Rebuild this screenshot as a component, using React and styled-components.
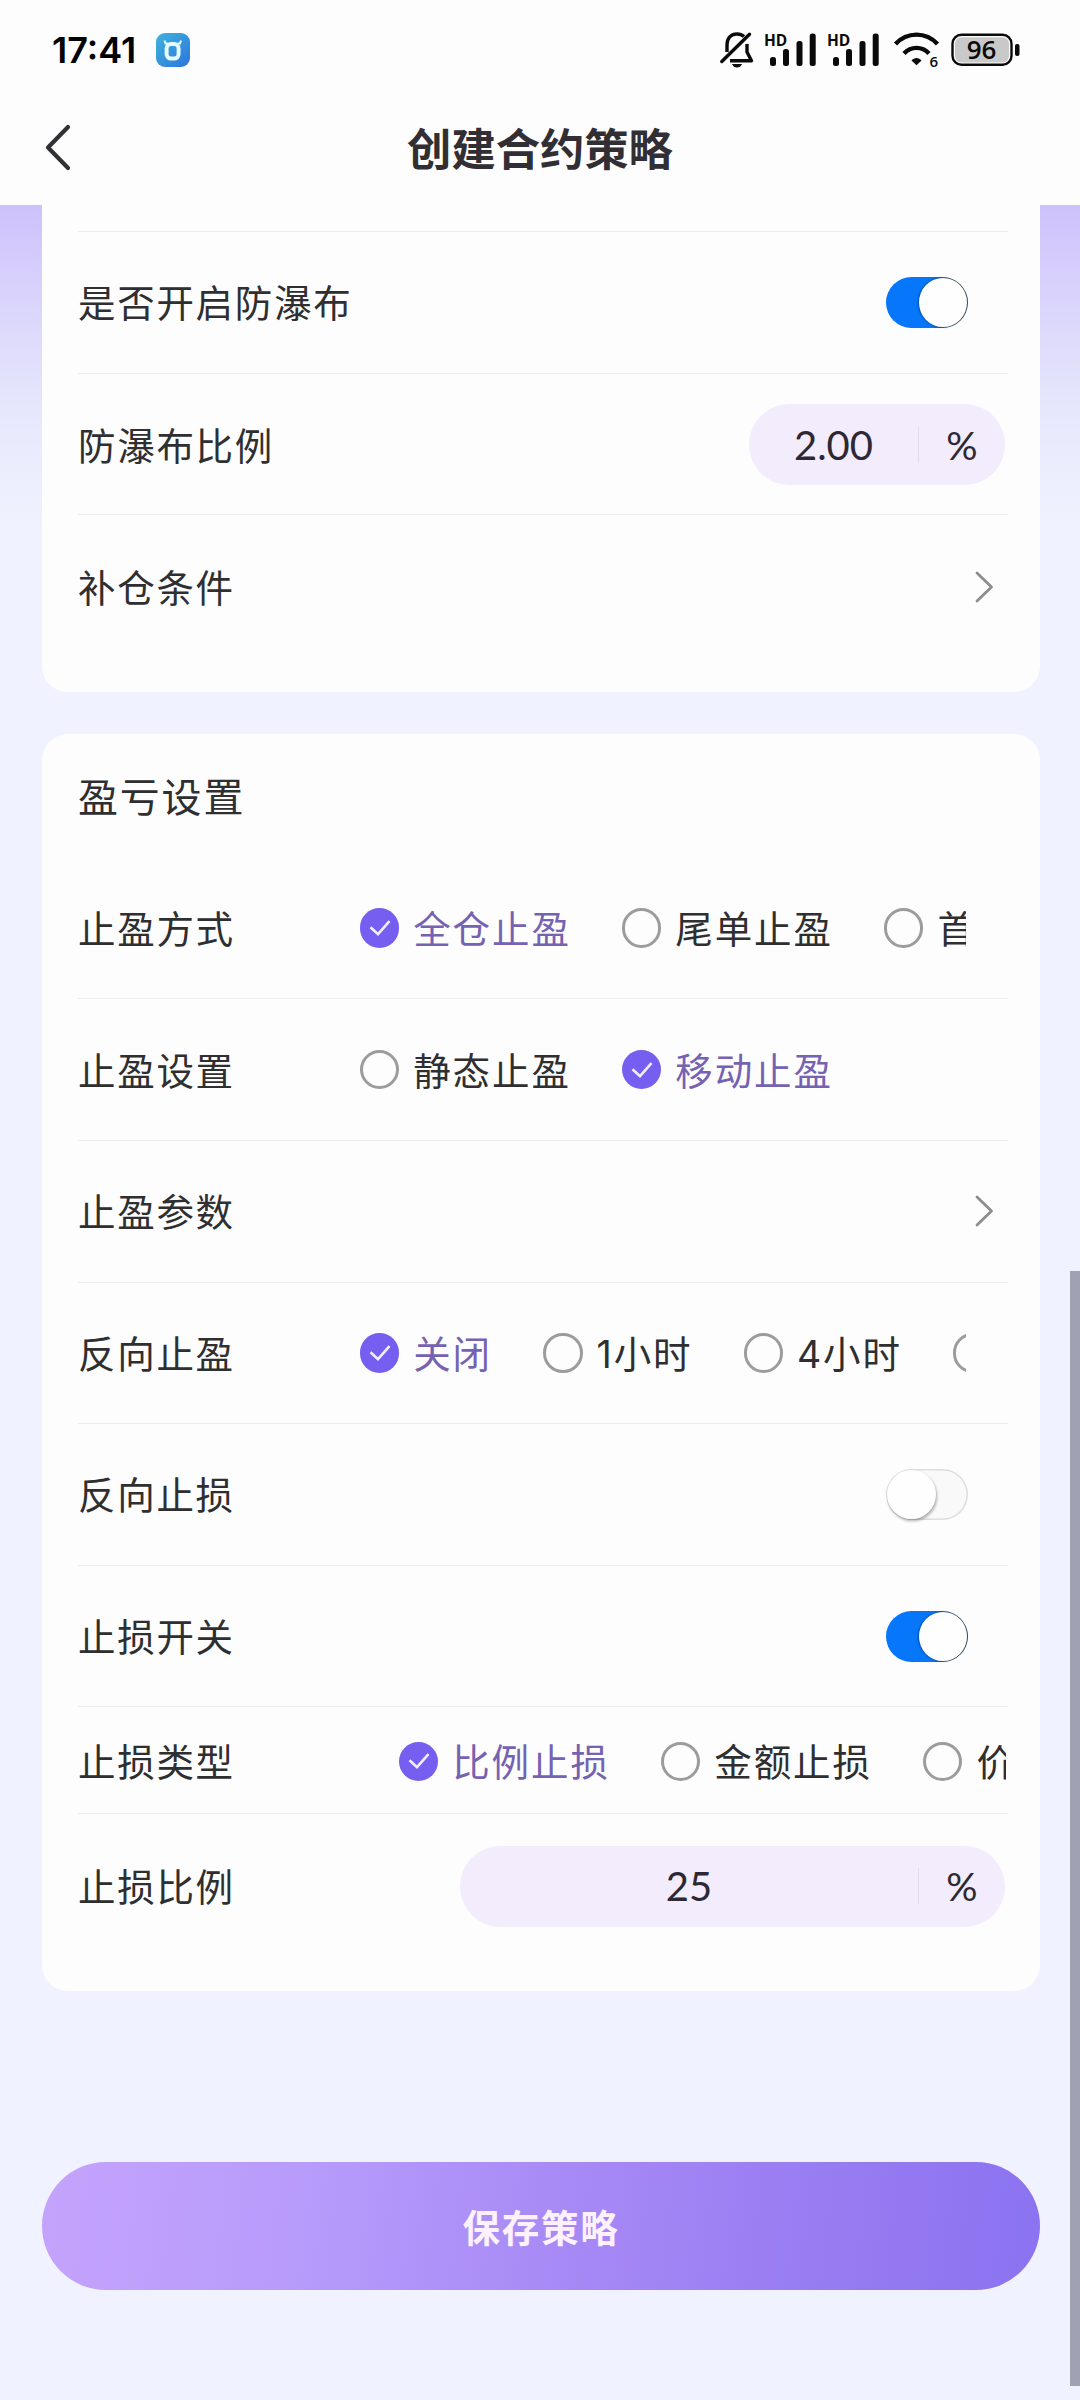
import React, { useState } from "react";
import styled, { createGlobalStyle } from "styled-components";

const GlobalStyle = createGlobalStyle`
  * {
    box-sizing: border-box;
  }

  body {
    margin: 0;
    background: #f0f2ff;
    font-family: Inter, "Noto Sans CJK SC", sans-serif;
    color: #2f2f31;
  }

  svg {
    flex: none;
    overflow: visible;
  }
`;

const Page = styled.div`
  position: relative;
  display: flex;
  flex-direction: column;
  width: 1080px;
  height: 2400px;
  overflow: hidden;
  background: linear-gradient(
    180deg,
    #cdc1fb 205px,
    #d6cefc 270px,
    #e1e0fb 365px,
    #e9ebfd 440px,
    #f0f2ff 530px
  );
`;

const StatusBar = styled.div`
  display: flex;
  align-items: center;
  justify-content: space-between;
  height: 100px;
  padding: 0 60px 0 52px;
  background: #fdfdfd;
`;

const StatusLeft = styled.div`
  display: flex;
  align-items: center;
  gap: 17px;
`;

const Time = styled.span`
  width: 87px;
  padding-bottom: 1px;
  font-size: 36px;
  font-weight: 600;
  white-space: nowrap;
  color: #000;
`;

const StatusRight = styled.div`
  display: flex;
  align-items: center;
  gap: 11px;
`;

const SignalGroup = styled.div`
  display: flex;
  align-items: center;
  gap: 11px;
  margin-right: 3px;
`;

const Header = styled.header`
  display: grid;
  grid-template-columns: 120px 1fr 120px;
  align-items: center;
  height: 105px;
  padding-bottom: 6px;
  background: #fdfdfd;
`;

const BackButton = styled.button`
  display: flex;
  padding: 0 0 5px 44px;
  border: 0;
  background: none;
`;

const Title = styled.h1`
  margin: 0;
  text-align: center;
  font-size: 44.3px;
  line-height: 64px;
  font-weight: 700;
  color: #322f34;
`;

const Content = styled.main`
  display: flex;
  flex-direction: column;
  padding: 0 40px 0 42px;
`;

const Card = styled.section`
  padding: 0 32px 35px 36px;
  background: #fdfdfd;
  border-radius: ${(props) => (props.$cut ? "0 0 26px 26px" : "26px")};
  margin-bottom: ${(props) => (props.$cut ? "42px" : "0")};
`;

const CutRow = styled.div`
  height: 27px;
  border-bottom: 1px solid #eeeef0;
`;

const CardTitle = styled.h2`
  display: flex;
  align-items: center;
  height: 124px;
  margin: 0;
  padding-bottom: 2px;
  font-size: 40px;
  font-weight: 400;
  letter-spacing: 1.8px;
`;

const Row = styled.div`
  display: flex;
  align-items: center;
  justify-content: space-between;
  height: ${(props) => props.$height || 141.6}px;
  padding-top: ${(props) => props.$top || 0}px;
  padding-right: ${(props) => props.$right || 0}px;
  border-bottom: 1px solid ${(props) => (props.$last ? "transparent" : "#eeeef0")};
`;

const Label = styled.span`
  flex: none;
  padding-top: 4px;
  font-size: 37.5px;
  line-height: 54px;
  letter-spacing: 1.7px;
`;

const Options = styled.div`
  display: flex;
  width: ${(props) => props.$width}px;
  padding-top: 4px;
  gap: 51.3px;
  overflow: hidden;
`;

const OptionItem = styled.label`
  display: flex;
  flex: none;
  align-items: center;
  gap: 13.9px;
  font-size: 37.5px;
  line-height: 54px;
  letter-spacing: 1.9px;
  color: ${(props) => (props.$active ? "#7562b2" : "#2f2f31")};
`;

const Circle = styled.span`
  display: flex;
  align-items: center;
  justify-content: center;
  width: 39.3px;
  height: 39.3px;
  margin-bottom: 4px;
  border-radius: 50%;
  border: ${(props) => (props.$active ? "0" : "3px solid #9c9c9c")};
  background: ${(props) => (props.$active ? "#765ff0" : "transparent")};
`;

const Toggle = styled.button`
  display: flex;
  justify-content: ${(props) => (props.$on ? "flex-end" : "flex-start")};
  width: 82px;
  height: 51px;
  padding: 1px;
  border: 0;
  border-radius: 26px;
  background: ${(props) =>
    props.$on ? "linear-gradient(90deg, #0677fb 55%, #2c4756 80%)" : "#f9f9f9"};
  box-shadow: ${(props) => (props.$on ? "none" : "inset 0 0 0 1.5px #dedede")};
`;

const Knob = styled.span`
  width: 48.5px;
  height: 49px;
  border-radius: 50%;
  background: #fefefe;
  box-shadow: ${(props) =>
    props.$on ? "-1px 0 2px rgba(0, 50, 110, 0.6)" : "1px 2px 3px rgba(0, 0, 0, 0.32)"};
`;

const Pill = styled.div`
  display: flex;
  align-items: center;
  width: ${(props) => props.$width}px;
  height: 81px;
  border-radius: 41px;
  background: #f2ecfc;
  font-family: Lato, sans-serif;
  font-size: 40px;
  color: #2d2833;
`;

const PillValue = styled.span`
  flex: 1;
  text-align: center;
`;

const PillUnit = styled.span`
  width: 87px;
  height: 36px;
  line-height: 36px;
  border-left: 1.5px solid #e3dced;
  font-size: 39px;
  text-align: center;
`;

const SaveButton = styled.button`
  height: 128px;
  margin: 171px 0 0;
  padding: 0 0 2px;
  border: 0;
  border-radius: 64px;
  background: linear-gradient(97deg, #c4a3fb 0%, #b79bfb 27%, #a98bf6 50%, #997df2 75%, #8b72f0 100%);
  font-family: inherit;
  font-size: 37.5px;
  font-weight: 700;
  letter-spacing: 1.7px;
  color: #fdf1fd;
`;

const ScrollThumb = styled.div`
  position: absolute;
  top: 1271px;
  right: 0;
  width: 10px;
  height: 1115px;
  background: #a0a2b4;
`;

function AppIcon() {
  return (
    <svg width="34" height="34" viewBox="0 0 34 34">
      <defs>
        <linearGradient id="appBg" x1="0" y1="0" x2="1" y2="1">
          <stop offset="0" stopColor="#3fb4dc" />
          <stop offset="1" stopColor="#2e74dc" />
        </linearGradient>
      </defs>
      <rect width="34" height="34" rx="9" fill="url(#appBg)" />
      <rect x="10.6" y="11" width="12" height="14.6" rx="4.5" fill="none" stroke="#e4fbff" strokeWidth="4" />
      <path d="M8.5 7.5 L9.5 10.5 H12 M25 7.5 L24 10.5 H21.5" fill="none" stroke="#e4fbff" strokeWidth="2" />
    </svg>
  );
}

function BellOff() {
  return (
    <svg width="34" height="36" viewBox="0 0 34 36" fill="none" stroke="#0a0a0a" strokeWidth="3.4">
      <path d="M1.8 29.5 L29.5 2.2" strokeLinecap="round" />
      <path d="M7 20 V13 C7 6 11 2 17 2 C20 2 22.3 3 24 4.6" />
      <path d="M27 12 V20 L31.5 28.7 H10" strokeLinejoin="round" />
      <path d="M12 32 H22 C21 34.5 19.5 35.5 17 35.5 C14.5 35.5 13 34.5 12 32 Z" fill="#0a0a0a" stroke="none" />
    </svg>
  );
}

function Signal() {
  return (
    <svg width="52" height="34" viewBox="0 0 52 34">
      <text x="-1" y="12.8" fontFamily="Open Sans" fontWeight="700" fontSize="15.5" fill="#0a0a0a">
        HD
      </text>
      <rect x="5" y="24" width="6" height="9" rx="2.5" fill="#0a0a0a" />
      <rect x="18" y="16" width="6" height="17" rx="2.5" fill="#0a0a0a" />
      <rect x="31.5" y="8" width="6" height="25" rx="2.5" fill="#0a0a0a" />
      <rect x="44.7" y="0.5" width="6" height="32.5" rx="2.5" fill="#0a0a0a" />
    </svg>
  );
}

function Wifi() {
  return (
    <svg width="46" height="36" viewBox="0 0 46 36" fill="none" stroke="#0a0a0a">
      <path d="M1.5 12 C13 -0.5 32 -0.5 43.5 12" strokeWidth="4.4" />
      <path d="M10 21.5 C17 14 28 14 35 21.5" strokeWidth="4.4" />
      <path d="M17.5 28.5 C20 25 25 25 27.5 28.5 L22.5 33.3 Z" fill="#0a0a0a" stroke="none" />
      <text x="35.5" y="35" fontFamily="Open Sans" fontWeight="600" fontSize="15" fill="#0a0a0a" stroke="none">
        6
      </text>
    </svg>
  );
}

function Battery() {
  return (
    <svg width="69" height="34" viewBox="0 0 69 34">
      <rect x="1.5" y="1.8" width="59" height="30" rx="9" fill="#fdfdfd" stroke="#0a0a0a" strokeWidth="2.4" />
      <rect x="4" y="4.2" width="54" height="25.4" rx="6.5" fill="#c9c9c9" />
      <rect x="64" y="11" width="4.5" height="12" rx="2" fill="#0a0a0a" />
      <text x="30.5" y="26" textAnchor="middle" fontFamily="Open Sans" fontWeight="600" fontSize="26" fill="#0a0a0a">
        96
      </text>
    </svg>
  );
}

function Arrow() {
  return (
    <svg width="20" height="32" viewBox="0 0 20 32" fill="none">
      <path d="M2 2 L16.5 16 L2 30" stroke="#8d8d8d" strokeWidth="2.8" strokeLinecap="round" strokeLinejoin="round" />
    </svg>
  );
}

function Switch({ defaultOn }) {
  const [on, setOn] = useState(defaultOn);

  return (
    <Toggle $on={on} onClick={() => setOn(!on)}>
      <Knob $on={on} />
    </Toggle>
  );
}

function RadioGroup({ options, initial, width = 606 }) {
  const [value, setValue] = useState(initial);

  return (
    <Options $width={width}>
      {options.map((option) => (
        <OptionItem key={option} $active={option === value} onClick={() => setValue(option)}>
          <Circle $active={option === value}>
            {option === value && (
              <svg width="22" height="18" viewBox="0 0 22 18" fill="none">
                <path d="M1.5 8.2 L9 15.2 L20.5 2.2" stroke="#f4edff" strokeWidth="2.6" />
              </svg>
            )}
          </Circle>
          {option}
        </OptionItem>
      ))}
    </Options>
  );
}

function PercentInput({ value, width }) {
  return (
    <Pill $width={width}>
      <PillValue>{value}</PillValue>
      <PillUnit>%</PillUnit>
    </Pill>
  );
}

export default function App() {
  return (
    <Page>
      <GlobalStyle />
      <StatusBar>
        <StatusLeft>
          <Time>17:41</Time>
          <AppIcon />
        </StatusLeft>
        <StatusRight>
          <SignalGroup>
            <BellOff />
            <Signal />
            <Signal />
          </SignalGroup>
          <Wifi />
          <Battery />
        </StatusRight>
      </StatusBar>
      <Header>
        <BackButton>
          <svg width="30" height="48" viewBox="0 0 30 48" fill="none">
            <path d="M24 4 L4 24.5 L24 45" stroke="#323035" strokeWidth="4.2" strokeLinecap="round" strokeLinejoin="round" />
          </svg>
        </BackButton>
        <Title>创建合约策略</Title>
      </Header>
      <Content>
        <Card $cut>
          <CutRow />
          <Row $right={40}>
            <Label>是否开启防瀑布</Label>
            <Switch defaultOn />
          </Row>
          <Row $right={3} $top={2}>
            <Label>防瀑布比例</Label>
            <PercentInput value="2.00" width={256} />
          </Row>
          <Row $right={13} $top={3} $last>
            <Label>补仓条件</Label>
            <Arrow />
          </Row>
        </Card>
        <Card>
          <CardTitle>盈亏设置</CardTitle>
          <Row $right={42}>
            <Label>止盈方式</Label>
            <RadioGroup options={["全仓止盈", "尾单止盈", "首单止盈"]} initial="全仓止盈" />
          </Row>
          <Row $right={42}>
            <Label>止盈设置</Label>
            <RadioGroup options={["静态止盈", "移动止盈"]} initial="移动止盈" />
          </Row>
          <Row $right={13}>
            <Label>止盈参数</Label>
            <Arrow />
          </Row>
          <Row $right={42}>
            <Label>反向止盈</Label>
            <RadioGroup options={["关闭", "1小时", "4小时", "8小时"]} initial="关闭" />
          </Row>
          <Row $right={40}>
            <Label>反向止损</Label>
            <Switch defaultOn={false} />
          </Row>
          <Row $right={40}>
            <Label>止损开关</Label>
            <Switch defaultOn />
          </Row>
          <Row $right={2} $top={2} $height={107}>
            <Label>止损类型</Label>
            <RadioGroup options={["比例止损", "金额止损", "价格止损"]} initial="比例止损" width={607} />
          </Row>
          <Row $right={3} $top={3} $height={142} $last>
            <Label>止损比例</Label>
            <PercentInput value="25" width={545} />
          </Row>
        </Card>
        <SaveButton>保存策略</SaveButton>
      </Content>
      <ScrollThumb />
    </Page>
  );
}
